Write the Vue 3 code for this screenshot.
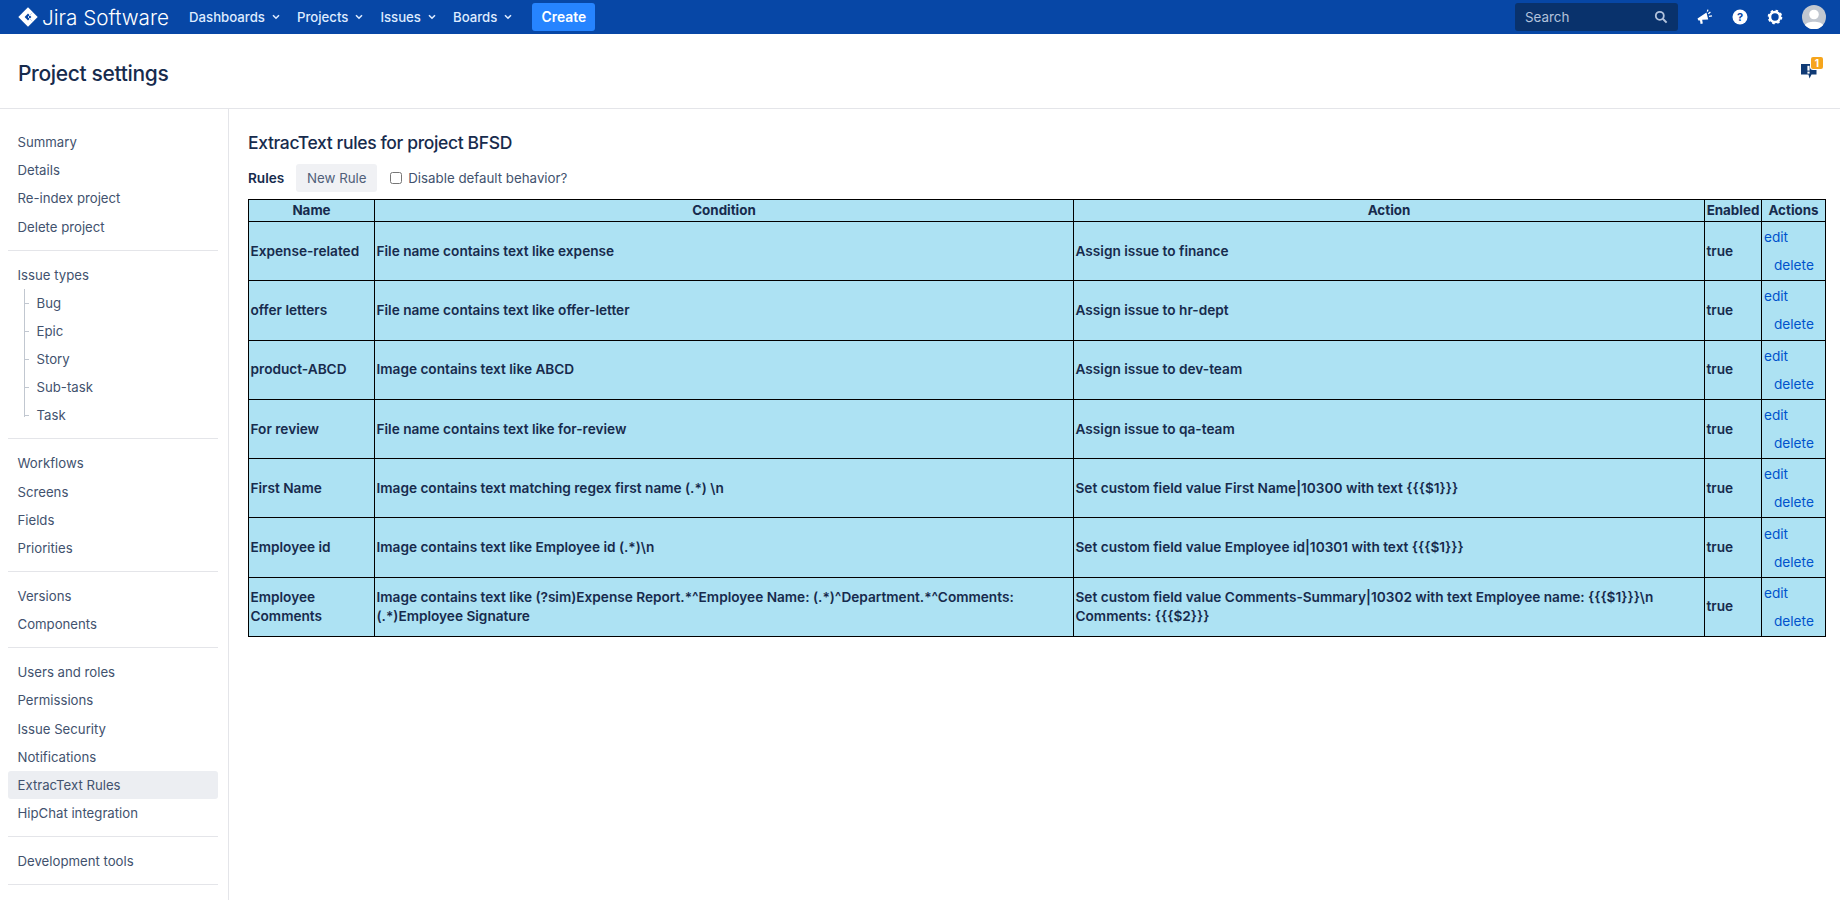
<script setup>
const topLinks = ["Dashboards", "Projects", "Issues", "Boards"];

const sections = [
  { items: ["Summary", "Details", "Re-index project", "Delete project"] },
  { items: ["Issue types"], subItems: ["Bug", "Epic", "Story", "Sub-task", "Task"] },
  { items: ["Workflows", "Screens", "Fields", "Priorities"] },
  { items: ["Versions", "Components"] },
  {
    items: [
      "Users and roles",
      "Permissions",
      "Issue Security",
      "Notifications",
      "ExtracText Rules",
      "HipChat integration",
    ],
  },
  { items: ["Development tools"] },
];

const rules = [
  ["Expense-related", "File name contains text like expense", "Assign issue to finance"],
  ["offer letters", "File name contains text like offer-letter", "Assign issue to hr-dept"],
  ["product-ABCD", "Image contains text like ABCD", "Assign issue to dev-team"],
  ["For review", "File name contains text like for-review", "Assign issue to qa-team"],
  [
    "First Name",
    "Image contains text matching regex first name (.*) \\n",
    "Set custom field value First Name|10300 with text {{{$1}}}",
  ],
  [
    "Employee id",
    "Image contains text like Employee id (.*)\\n",
    "Set custom field value Employee id|10301 with text {{{$1}}}",
  ],
  [
    "Employee Comments",
    "Image contains text like (?sim)Expense Report.*^Employee Name: (.*)^Department.*^Comments: (.*)Employee Signature",
    "Set custom field value Comments-Summary|10302 with text Employee name: {{{$1}}}\\n Comments: {{{$2}}}",
  ],
];
</script>

<template>
  <div class="page">
    <header class="topbar">
      <div class="logo">
        <svg class="logo-mark" viewBox="0 0 20 20" width="20" height="20">
          <path d="M10 0.3 L19.7 10 L10 19.7 L0.3 10 Z" fill="#fff" />
          <path d="M10 6.6 L13.4 10 L10 13.4 L6.6 10 Z" fill="#0747a6" />
          <path d="M14.4 5.6 L10 10 L14.4 14.4" fill="none" stroke="#c4d6f2" stroke-width="1" />
        </svg>
        <span class="logo-text">Jira Software</span>
      </div>
      <nav class="topnav">
        <a v-for="link in topLinks" :key="link" class="toplink">
          {{ link }}
          <svg viewBox="0 0 8 6" width="8" height="6">
            <path d="M1 1.2 L4 4.2 L7 1.2" fill="none" stroke="#deebff" stroke-width="1.6" />
          </svg>
        </a>
      </nav>
      <button class="create">Create</button>
      <div class="spacer"></div>
      <div class="search">
        <span>Search</span>
        <svg viewBox="0 0 14 14" width="14" height="14">
          <circle cx="5.8" cy="5.8" r="4" fill="none" stroke="#b3c3dc" stroke-width="1.8" />
          <path d="M8.8 8.8 L12.6 12.6" stroke="#b3c3dc" stroke-width="2" />
        </svg>
      </div>
      <div class="top-icons">
        <svg viewBox="0 0 16 16" width="16" height="16">
          <path d="M0.5 9.5 L9.5 3.5 L11.2 10.5 L5.2 10.8 L5.8 14.6 L3.6 15 L3 11.4 L1.4 11.6 Z" fill="#fff" />
          <path d="M11.3 4.8 L13.4 3 M12 7.4 L15 6.8 M10.4 2.6 L10.9 0.6" stroke="#fff" stroke-width="1.3" />
        </svg>
        <svg viewBox="0 0 16 16" width="16" height="16">
          <circle cx="8" cy="8" r="7.5" fill="#fff" />
          <text x="8" y="12" text-anchor="middle" class="help-mark">?</text>
        </svg>
        <svg viewBox="0 0 16 16" width="16" height="16">
          <circle cx="8" cy="8" r="5" fill="none" stroke="#fff" stroke-width="2.6" />
          <circle cx="8" cy="8" r="6.4" fill="none" stroke="#fff" stroke-width="1.8" stroke-dasharray="2.5 2.5" />
        </svg>
        <svg class="avatar" viewBox="0 0 24 24" width="24" height="24">
          <circle cx="12" cy="12" r="12" fill="#c1c7d0" />
          <circle cx="12" cy="9.5" r="4.8" fill="#fff" />
          <path d="M2.8 20 C5 15.5 19 15.5 21.2 20 A12 12 0 0 1 2.8 20 Z" fill="#fff" />
        </svg>
      </div>
    </header>

    <div class="page-head">
      <h1>Project settings</h1>
      <div class="feedback">
        <svg viewBox="0 0 16 16" width="16" height="16">
          <path d="M0 1 H15.5 V11.5 H10.5 L8.5 15.5 L7.5 11.5 H0 Z" fill="#0f3a75" />
          <rect x="6.4" y="2.8" width="2.2" height="4.8" fill="#fff" />
          <rect x="6.4" y="8.6" width="2.2" height="2" fill="#fff" />
        </svg>
        <span class="badge">1</span>
      </div>
    </div>

    <div class="body">
      <aside class="sidebar">
        <section v-for="(section, i) in sections" :key="i" class="side-group">
          <a
            v-for="item in section.items"
            :key="item"
            class="side-item"
            :class="{ active: item === 'ExtracText Rules' }"
          >{{ item }}</a>
          <div v-if="section.subItems" class="sub-list">
            <a v-for="sub in section.subItems" :key="sub" class="side-item sub-item">{{ sub }}</a>
          </div>
        </section>
      </aside>

      <main class="content">
        <h2>ExtracText rules for project BFSD</h2>
        <div class="toolbar">
          <b>Rules</b>
          <button class="new-rule">New Rule</button>
          <label class="check"><input type="checkbox" /> Disable default behavior?</label>
        </div>
        <table class="rules">
          <colgroup>
            <col class="c-name" />
            <col class="c-cond" />
            <col class="c-action" />
            <col class="c-enabled" />
            <col />
          </colgroup>
          <thead>
            <tr>
              <th>Name</th>
              <th>Condition</th>
              <th>Action</th>
              <th>Enabled</th>
              <th>Actions</th>
            </tr>
          </thead>
          <tbody>
            <tr v-for="rule in rules" :key="rule[0]">
              <td>{{ rule[0] }}</td>
              <td>{{ rule[1] }}</td>
              <td>{{ rule[2] }}</td>
              <td>true</td>
              <td class="links">
                <a>edit</a>
                <a class="del">delete</a>
              </td>
            </tr>
          </tbody>
        </table>
      </main>
    </div>
  </div>
</template>

<style>
html,
body {
  margin: 0;
  background: #fff;
}
</style>

<style scoped>
.page {
  height: 900px;
  overflow: hidden;
  font-family: Inter, "Noto Sans", sans-serif;
  font-size: 14px;
  color: #172b4d;
}

.topbar {
  display: flex;
  align-items: center;
  height: 34px;
  padding: 0 14px 0 18px;
  background: #0747a6;
  box-sizing: border-box;
}
.logo {
  display: flex;
  align-items: center;
  gap: 4px;
  color: #fff;
}
.logo-text {
  font-size: 20.7px;
  font-weight: 300;
}
.topnav {
  display: flex;
  gap: 17px;
  margin-left: 20px;
}
.toplink {
  display: flex;
  align-items: center;
  gap: 7px;
  color: #deebff;
  font-size: 13.2px;
  font-weight: 500;
}
.create {
  margin-left: 20px;
  width: 63px;
  height: 28px;
  border: 0;
  border-radius: 3px;
  background: #2684ff;
  color: #fff;
  font: 600 13.8px Inter, sans-serif;
}
.spacer {
  flex: 1;
}
.search {
  display: flex;
  align-items: center;
  justify-content: space-between;
  width: 163px;
  height: 28px;
  padding: 0 10px;
  box-sizing: border-box;
  border-radius: 3px;
  background: #09326c;
  color: #b3c3dc;
  font-size: 13.4px;
}
.top-icons {
  display: flex;
  align-items: center;
  gap: 19px;
  margin-left: 19px;
}
.help-mark {
  font: 700 11px Inter, sans-serif;
  fill: #0747a6;
}

.page-head {
  display: flex;
  align-items: center;
  justify-content: space-between;
  height: 75px;
  padding: 5px 17px 0 18px;
  border-bottom: 1px solid #e4e5e9;
  box-sizing: border-box;
}
h1 {
  margin: 0;
  font-size: 21px;
  letter-spacing: -0.35px;
  font-weight: 500;
}
.feedback {
  position: relative;
  width: 22px;
  height: 22px;
  margin-bottom: 12px;
  display: flex;
  align-items: flex-end;
}
.badge {
  position: absolute;
  top: 0;
  right: 0;
  width: 12px;
  height: 12px;
  border-radius: 2px;
  background: #f6a51c;
  box-shadow: 0 0 0 1px #fff;
  color: #fff;
  font-size: 10px;
  font-weight: 700;
  line-height: 12px;
  text-align: center;
}

.body {
  display: flex;
}
.sidebar {
  width: 229px;
  flex: none;
  padding: 0 10px 0 8px;
  border-right: 1px solid #e4e5e9;
  box-sizing: border-box;
  height: 792px;
}
.side-group {
  padding: 10px 0 8.8px;
  border-bottom: 1px solid #e4e5e9;
}
.side-group:first-child {
  padding-top: 19px;
}
.side-item {
  display: block;
  height: 28.2px;
  line-height: 28px;
  padding-left: 9.5px;
  border-radius: 3px;
  color: #42526e;
  font-size: 13.2px;
}
.side-item.active {
  background: #eceef2;
}
.sub-list {
  position: relative;
  margin-left: 0;
}
.sub-list::before {
  content: "";
  position: absolute;
  left: 16px;
  top: 0;
  bottom: 13px;
  width: 1px;
  background: #c1c7d0;
}
.sub-item {
  position: relative;
  padding-left: 28.5px;
}
.sub-item::before {
  content: "";
  position: absolute;
  left: 16px;
  top: 14px;
  width: 5px;
  height: 1px;
  background: #c1c7d0;
}

.content {
  flex: 1;
  padding: 0 14px 0 19px;
  min-width: 0;
}
h2 {
  margin: 0;
  padding-top: 21px;
  height: 55px;
  box-sizing: border-box;
  font-size: 17.5px;
  letter-spacing: -0.36px;
  line-height: 26px;
  font-weight: 500;
}
.toolbar {
  display: flex;
  align-items: center;
  height: 28px;
  font-size: 13.3px;
  color: #42526e;
}
.toolbar b {
  color: #172b4d;
  font-size: 13.6px;
  font-weight: 600;
}
.new-rule {
  margin-left: 12px;
  width: 81px;
  height: 28px;
  border: 0;
  border-radius: 3px;
  background: #f0f1f4;
  color: #505f79;
  font: 400 13.3px Inter, sans-serif;
}
.check {
  display: flex;
  align-items: center;
  gap: 6px;
  margin-left: 13px;
}
.check input {
  margin: 0;
  width: 12px;
  height: 12px;
}

.rules {
  width: 1578px;
  margin-top: 7px;
  border-collapse: collapse;
  table-layout: fixed;
  background: #ade2f3;
  font-size: 13.65px;
  font-weight: 600;
}
.c-name {
  width: 126px;
}
.c-cond {
  width: 699px;
}
.c-action {
  width: 631px;
}
.c-enabled {
  width: 57px;
}
th,
td {
  border: 1px solid #000;
  padding: 0 1.5px;
  line-height: 19px;
}
th {
  height: 21px;
  font-size: 13.4px;
  font-weight: 700;
}
td {
  height: 58.3px;
}
td.links {
  padding-left: 2px;
  font-weight: 400;
}
.links a {
  display: block;
  color: #0052cc;
  line-height: 28px;
}
.links .del {
  margin-left: 10px;
}
</style>
